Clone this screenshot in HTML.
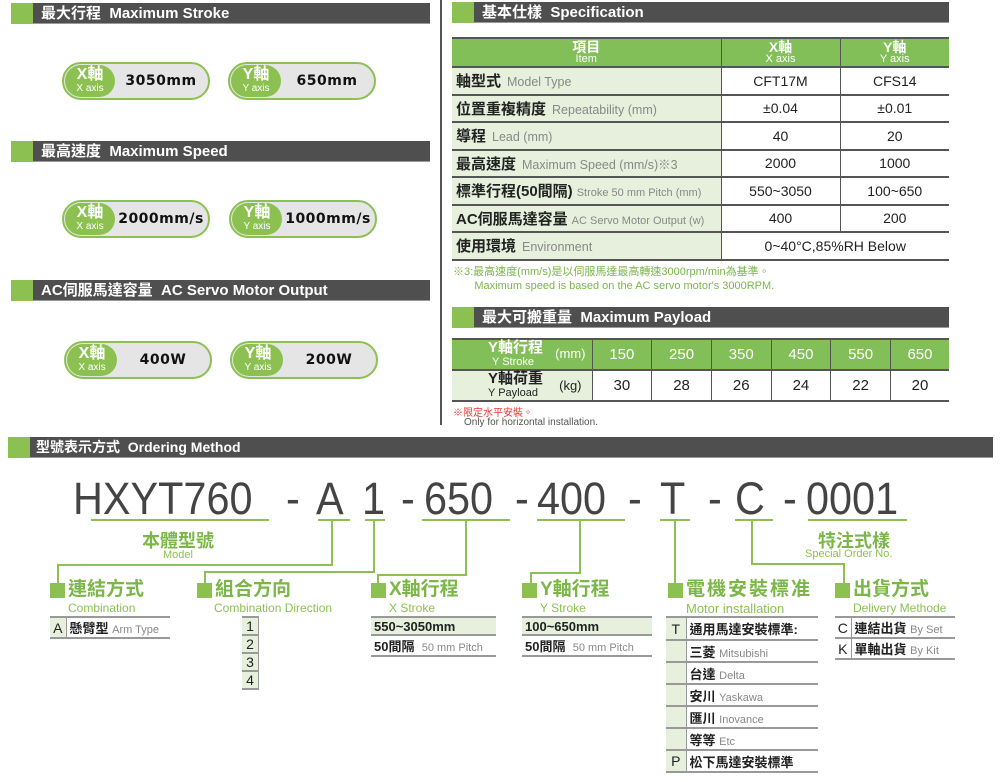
<!DOCTYPE html>
<html><head><meta charset="utf-8">
<style>
*{margin:0;padding:0;box-sizing:border-box}
body{width:1000px;height:782px;background:#fff;position:relative;overflow:hidden;font-family:"Liberation Sans","Noto Sans CJK TC",sans-serif;color:#222}
.a{position:absolute}
.hd{position:absolute;height:21px;background:#4f4f4f;color:#fff;font-weight:bold;font-size:15px;line-height:21px;padding-left:30px;border-bottom:1px solid #999}
.hd:before{content:"";position:absolute;left:0;top:0;width:22px;height:21px;background:#8cc152}
.pill{position:absolute;width:148px;height:38px;border:2px solid #8cc152;border-radius:19px;background:#e5e5e5}
.pill .c{position:absolute;left:1px;top:1px;width:50px;height:32px;border-radius:16px;background:#8cc152;color:#fff;text-align:center;font-weight:bold;font-size:16px;line-height:17px;padding-top:1px}
.pill .c small{display:block;font-size:10px;line-height:11px;font-weight:normal}
.pill .v{position:absolute;left:52px;right:2px;top:0;line-height:34px;text-align:center;font-family:"DejaVu Sans",sans-serif;font-weight:bold;font-size:14px;color:#111;letter-spacing:0.5px}
table{border-collapse:collapse;position:absolute}
.spec td{border-bottom:2px solid #555;height:27.5px;font-size:14px;padding:0}
.spec td.i{background:#e6f0dc;padding-left:4px;font-weight:bold;font-size:15px;white-space:nowrap;border-right:1px solid #555}
.spec td.i span{font-weight:normal;color:#888;font-size:12.5px;margin-left:6px}
.spec td.v{text-align:center;border-right:1px solid #555}
.gh{background:#82bf58;color:#fff;text-align:center;font-weight:bold;line-height:14px}
.gh small{display:block;font-weight:normal;font-size:11px;line-height:11px}
.pl td{border-bottom:2px solid #555;border-right:1px solid #555;text-align:center;font-size:15px;padding:0}
.big{position:absolute;top:474px;font-size:45px;color:#444;line-height:50px;transform:scaleX(0.92);transform-origin:left}
.ul{position:absolute;top:519px;height:2px;background:#8cc152}
.ln{position:absolute;background:#8cc152}
.sec{position:absolute;top:580px;color:#7ab648;font-weight:bold;font-size:19px;line-height:20px;padding-left:18px}
.sec:before{content:"";position:absolute;left:0;top:3px;width:15px;height:15px;background:#8cc152}
.sub{position:absolute;top:601px;color:#8cc152;font-size:12px}
.ot td{border-bottom:2px solid #999;font-size:13px;padding:0 3px;height:18px;white-space:nowrap}
.ot td.k{border-right:1px solid #999;background:#e6f0dc;text-align:center;font-size:14px;padding:0}
.ot span{color:#888;font-weight:normal;font-size:11px}
.ot{border-top:2px solid #999}
</style></head><body>

<div class="hd" style="left:11px;top:3px;width:419px">最大行程 &nbsp;Maximum Stroke</div>
<div class="hd" style="left:11px;top:141px;width:419px">最高速度 &nbsp;Maximum Speed</div>
<div class="hd" style="left:11px;top:280px;width:419px">AC伺服馬達容量 &nbsp;AC Servo Motor Output</div>
<div class="a" style="left:440px;top:0;width:2px;height:425px;background:#555"></div>

<div class="pill" style="left:62px;top:62px"><div class="c">X軸<small>X axis</small></div><div class="v">3050mm</div></div>
<div class="pill" style="left:228px;top:62px"><div class="c">Y軸<small>Y axis</small></div><div class="v">650mm</div></div>
<div class="pill" style="left:62px;top:200px"><div class="c">X軸<small>X axis</small></div><div class="v">2000mm/s</div></div>
<div class="pill" style="left:229px;top:200px"><div class="c">Y軸<small>Y axis</small></div><div class="v">1000mm/s</div></div>
<div class="pill" style="left:64px;top:341px"><div class="c">X軸<small>X axis</small></div><div class="v">400W</div></div>
<div class="pill" style="left:230px;top:341px"><div class="c">Y軸<small>Y axis</small></div><div class="v">200W</div></div>

<div class="hd" style="left:452px;top:2px;width:497px">基本仕樣 &nbsp;Specification</div>
<table class="spec" style="left:452px;top:37px;width:497px;border-top:2px solid #555">
<tr><td class="gh" style="width:269px;height:29px;border-right:1px solid #555;border-bottom:2px solid #555">項目<small>Item</small></td><td class="gh" style="width:119px;border-right:1px solid #555;border-bottom:2px solid #555">X軸<small>X axis</small></td><td class="gh" style="border-bottom:2px solid #555">Y軸<small>Y axis</small></td></tr>
<tr><td class="i">軸型式<span>Model Type</span></td><td class="v">CFT17M</td><td class="v" style="border-right:0">CFS14</td></tr>
<tr><td class="i">位置重複精度<span>Repeatability (mm)</span></td><td class="v">±0.04</td><td class="v" style="border-right:0">±0.01</td></tr>
<tr><td class="i">導程<span>Lead (mm)</span></td><td class="v">40</td><td class="v" style="border-right:0">20</td></tr>
<tr><td class="i">最高速度<span>Maximum Speed (mm/s)※3</span></td><td class="v">2000</td><td class="v" style="border-right:0">1000</td></tr>
<tr><td class="i">標準行程(50間隔)<span style="font-size:11px;margin-left:4px">Stroke 50 mm Pitch (mm)</span></td><td class="v">550~3050</td><td class="v" style="border-right:0">100~650</td></tr>
<tr><td class="i">AC伺服馬達容量<span style="font-size:11px;margin-left:4px">AC Servo Motor Output (w)</span></td><td class="v">400</td><td class="v" style="border-right:0">200</td></tr>
<tr><td class="i">使用環境<span>Environment</span></td><td class="v" colspan="2" style="border-right:0">0~40°C,85%RH Below</td></tr>
</table>
<div class="a" style="left:453px;top:265px;font-size:11px;color:#7ab648;line-height:14px">※3:最高速度(mm/s)是以伺服馬達最高轉速3000rpm/min為基準。<br>&nbsp;&nbsp;&nbsp;&nbsp;&nbsp;&nbsp;&nbsp;Maximum speed is based on the AC servo motor's 3000RPM.</div>

<div class="hd" style="left:452px;top:307px;width:497px">最大可搬重量 &nbsp;Maximum Payload</div>
<table class="pl" style="left:452px;top:338px;width:497px;border-top:2px solid #555">
<tr style="height:31px;background:#82bf58;color:#fff"><td style="width:140px;text-align:left;padding-left:36px;font-weight:bold;line-height:13px;position:relative">Y軸行程<br><small style="font-weight:normal;font-size:11px;padding-left:4px">Y Stroke</small><span style="position:absolute;right:6px;top:7px;font-weight:normal;font-size:13px">(mm)</span></td><td>150</td><td>250</td><td>350</td><td>450</td><td>550</td><td style="border-right:0">650</td></tr>
<tr style="height:31px"><td style="background:#e6f0dc;text-align:left;padding-left:36px;font-weight:bold;line-height:13px;position:relative">Y軸荷重<br><small style="font-weight:normal;font-size:11px;padding-left:0">Y Payload</small><span style="position:absolute;right:10px;top:8px;font-weight:normal;font-size:13px">(kg)</span></td><td>30</td><td>28</td><td>26</td><td>24</td><td>22</td><td style="border-right:0">20</td></tr>
</table>
<div class="a" style="left:453px;top:404px;font-size:10px;color:#e53935">※限定水平安裝。</div>
<div class="a" style="left:464px;top:417px;font-size:10px;color:#555">Only for horizontal installation.</div>

<div class="hd" style="left:8px;top:437px;width:985px;font-size:14px;padding-left:28px">型號表示方式 &nbsp;Ordering Method</div>

<div class="big" style="left:73px">HXYT760</div>
<div class="big" style="left:286px">-</div>
<div class="big" style="left:316px">A</div>
<div class="big" style="left:362px">1</div>
<div class="big" style="left:401px">-</div>
<div class="big" style="left:424px">650</div>
<div class="big" style="left:515px">-</div>
<div class="big" style="left:537px">400</div>
<div class="big" style="left:628px">-</div>
<div class="big" style="left:660px">T</div>
<div class="big" style="left:708px">-</div>
<div class="big" style="left:735px">C</div>
<div class="big" style="left:783px">-</div>
<div class="big" style="left:806px">0001</div>

<div class="ul" style="left:91px;width:178px"></div>
<div class="ul" style="left:318px;width:32px"></div>
<div class="ul" style="left:365px;width:20px"></div>
<div class="ul" style="left:422px;width:88px"></div>
<div class="ul" style="left:537px;width:88px"></div>
<div class="ul" style="left:660px;width:30px"></div>
<div class="ul" style="left:735px;width:38px"></div>
<div class="ul" style="left:808px;width:99px"></div>

<div class="a" style="left:142px;top:527px;color:#7ab648;font-weight:bold;font-size:18px">本體型號</div>
<div class="a" style="left:163px;top:549px;color:#8cc152;font-size:11px">Model</div>
<div class="a" style="left:818px;top:527px;color:#7ab648;font-weight:bold;font-size:18px">特注式樣</div>
<div class="a" style="left:805px;top:548px;color:#8cc152;font-size:11px">Special Order No.</div>

<div class="ln" style="left:331px;top:521px;width:2px;height:45px"></div>
<div class="ln" style="left:57px;top:564px;width:276px;height:2px"></div>
<div class="ln" style="left:57px;top:564px;width:2px;height:20px"></div>
<div class="ln" style="left:373px;top:521px;width:2px;height:52px"></div>
<div class="ln" style="left:204px;top:571px;width:171px;height:2px"></div>
<div class="ln" style="left:204px;top:571px;width:2px;height:13px"></div>
<div class="ln" style="left:465px;top:521px;width:2px;height:55px"></div>
<div class="ln" style="left:377px;top:574px;width:90px;height:2px"></div>
<div class="ln" style="left:377px;top:574px;width:2px;height:10px"></div>
<div class="ln" style="left:579px;top:521px;width:2px;height:53px"></div>
<div class="ln" style="left:530px;top:572px;width:51px;height:2px"></div>
<div class="ln" style="left:530px;top:572px;width:2px;height:12px"></div>
<div class="ln" style="left:674px;top:521px;width:2px;height:63px"></div>
<div class="ln" style="left:751px;top:521px;width:2px;height:44px"></div>
<div class="ln" style="left:751px;top:563px;width:94px;height:2px"></div>
<div class="ln" style="left:843px;top:563px;width:2px;height:21px"></div>

<div class="sec" style="left:50px">連結方式</div><div class="sub" style="left:68px">Combination</div>
<div class="sec" style="left:197px">組合方向</div><div class="sub" style="left:214px">Combination Direction</div>
<div class="sec" style="left:371px">X軸行程</div><div class="sub" style="left:389px">X Stroke</div>
<div class="sec" style="left:522px">Y軸行程</div><div class="sub" style="left:540px">Y Stroke</div>
<div class="sec" style="left:668px;letter-spacing:2px">電機安裝標准</div><div class="sub" style="left:686px;font-size:13px">Motor installation</div>
<div class="sec" style="left:835px">出貨方式</div><div class="sub" style="left:853px">Delivery Methode</div>

<table class="ot" style="left:50px;top:616px;width:120px"><tr><td class="k" style="width:16px">A</td><td><b>懸臂型</b> <span>Arm Type</span></td></tr></table>
<table class="ot" style="left:242px;top:616px;width:17px"><tr><td class="k">1</td></tr><tr><td class="k">2</td></tr><tr><td class="k">3</td></tr><tr><td class="k">4</td></tr></table>
<table class="ot" style="left:371px;top:616px;width:125px"><tr><td style="background:#e6f0dc;font-weight:bold">550~3050mm</td></tr><tr><td><b>50間隔</b> &nbsp;<span>50 mm Pitch</span></td></tr></table>
<table class="ot" style="left:522px;top:616px;width:130px"><tr><td style="background:#e6f0dc;font-weight:bold">100~650mm</td></tr><tr><td><b>50間隔</b> &nbsp;<span>50 mm Pitch</span></td></tr></table>
<table class="ot" style="left:666px;top:616px;width:152px">
<tr style="height:23px"><td class="k" style="width:20px">T</td><td><b>通用馬達安裝標準:</b></td></tr>
<tr style="height:22px"><td class="k"></td><td><b>三菱</b> <span>Mitsubishi</span></td></tr>
<tr style="height:22px"><td class="k"></td><td><b>台達</b> <span>Delta</span></td></tr>
<tr style="height:22px"><td class="k"></td><td><b>安川</b> <span>Yaskawa</span></td></tr>
<tr style="height:22px"><td class="k"></td><td><b>匯川</b> <span>Inovance</span></td></tr>
<tr style="height:22px"><td class="k"></td><td><b>等等</b> <span>Etc</span></td></tr>
<tr style="height:22px"><td class="k">P</td><td><b>松下馬達安裝標準</b></td></tr>
</table>
<table class="ot" style="left:835px;top:616px;width:120px">
<tr><td class="k" style="width:16px;background:none">C</td><td><b>連結出貨</b> <span>By Set</span></td></tr>
<tr><td class="k" style="background:none">K</td><td><b>單軸出貨</b> <span>By Kit</span></td></tr>
</table>
</body></html>
